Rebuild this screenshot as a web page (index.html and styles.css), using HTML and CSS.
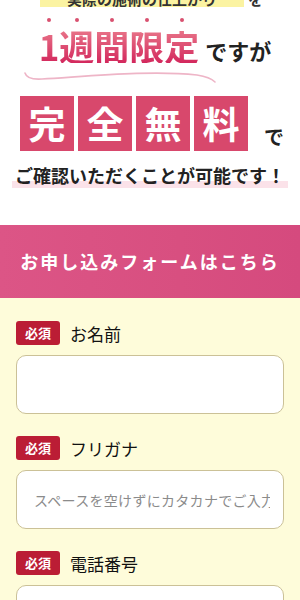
FILE: index.html
```html
<!DOCTYPE html>
<html lang="ja">
<head>
    <meta charset="UTF-8">
    <meta name="viewport" content="width=device-width, initial-scale=1.0">
    <title>お申し込みフォーム</title>
    <link rel="stylesheet" href="styles.css">
</head>
<body>
    <div class="hero">
        <div class="lead"><span class="lead-text"><span class="lead-mark">実際の施術の仕上がり</span>を</span></div>
        <div class="title">
            <span class="em">1</span><span class="em">週</span><span class="em">間</span><span class="em">限</span><span class="em">定</span><span class="tail">ですが</span>
        </div>
        <svg class="swoosh" width="200" height="14" viewBox="0 0 200 14">
            <path d="M3,4 Q5,11 20,10 C70,7 130,1 175,6 Q188,8 193,13" fill="none" stroke="#eeb5c7" stroke-width="1.6" stroke-linecap="round"/>
        </svg>
        <div class="free">
            <span class="box">完</span>
            <span class="box">全</span>
            <span class="box">無</span>
            <span class="box">料</span>
            <span class="de">で</span>
        </div>
        <p class="sub"><span>ご確認いただくことが可能です！</span></p>
    </div>

    <div class="bar">お申し込みフォームはこちら</div>

    <form class="form">
        <div class="field">
            <label class="label"><span class="req">必須</span>お名前</label>
            <input type="text" class="input">
        </div>
        <div class="field">
            <label class="label"><span class="req">必須</span>フリガナ</label>
            <input type="text" class="input" placeholder="スペースを空けずにカタカナでご入力ください">
        </div>
        <div class="field">
            <label class="label"><span class="req">必須</span>電話番号</label>
            <input type="tel" class="input">
        </div>
    </form>
</body>
</html>
```

FILE: styles.css
```css
body {
    margin: 0;
    background-color: #fff;
    font-family: "Noto Sans CJK JP", "Noto Sans", sans-serif;
    color: #222;
}
.hero {
    text-align: center;
    padding-bottom: 38px;
}
.lead {
    height: 7px;
    overflow: hidden;
}
.lead-text {
    display: block;
    margin-top: -10px;
    font-size: 15px;
    line-height: 17px;
    font-weight: bold;
    color: #333;
    padding-left: 40px;
    text-align: left;
}
.lead-mark {
    display: inline-block;
    width: 204px;
    background-color: #fbf3a2;
    text-align: center;
    margin-right: 4px;
}
.title {
    margin-top: 22px;
    padding-left: 10px;
    display: flex;
    justify-content: center;
    align-items: flex-end;
}
.em {
    position: relative;
    display: inline-block;
    font-size: 35px;
    line-height: 34px;
    font-weight: bold;
    background: linear-gradient(180deg, #e9778a, #d3285d);
    -webkit-background-clip: text;
    background-clip: text;
    color: transparent;
}
.em::before {
    content: "";
    position: absolute;
    top: -11px;
    left: 50%;
    width: 4px;
    height: 4px;
    margin-left: -2px;
    border-radius: 50%;
    background-color: #d9516f;
}
.tail {
    font-size: 22px;
    line-height: 26px;
    font-weight: bold;
    margin-left: 6px;
    color: #222;
}
.swoosh {
    display: block;
    margin: 6px 0 0 22px;
}
.free {
    display: flex;
    align-items: flex-end;
    gap: 4px;
    padding-left: 20px;
    margin-top: 13px;
}
.box {
    width: 54px;
    height: 55px;
    line-height: 55px;
    background-color: #d8486c;
    color: #fff;
    font-size: 37px;
    font-weight: bold;
}
.de {
    font-size: 20px;
    font-weight: bold;
    line-height: 24px;
    margin-left: 12px;
    margin-bottom: 2px;
}
.sub {
    margin: 12px 0 0;
    font-size: 18px;
    font-weight: bold;
    line-height: 24px;
}
.sub span {
    padding: 0 3px;
    background: linear-gradient(transparent 72%, #fbe2e9 72%);
}
.bar {
    height: 73px;
    line-height: 73px;
    text-align: center;
    color: #fff;
    font-size: 18px;
    font-weight: bold;
    letter-spacing: 2px;
    background: linear-gradient(90deg, #dc5586, #d84f80 60%, #d54a7e);
}
.form {
    background-color: #fefcda;
    padding: 23px 16px 30px;
}
.field {
    margin-bottom: 22px;
}
.label {
    display: flex;
    align-items: center;
    height: 24px;
    font-size: 17px;
    color: #111;
    margin-bottom: 10px;
}
.req {
    display: inline-block;
    width: 44px;
    height: 24px;
    line-height: 24px;
    border-radius: 3px;
    background-color: #bb1d35;
    color: #fff;
    font-size: 13px;
    font-weight: bold;
    text-align: center;
    margin-right: 10px;
}
.input {
    display: block;
    box-sizing: border-box;
    width: 100%;
    height: 59px;
    border: 1px solid #cbc197;
    border-radius: 10px;
    background-color: #fff;
    padding: 0 13px 0 17px;
    font-family: inherit;
    font-size: 14px;
    letter-spacing: 0.3px;
    outline: none;
}
.input::placeholder {
    color: #8b8b8b;
}
```
